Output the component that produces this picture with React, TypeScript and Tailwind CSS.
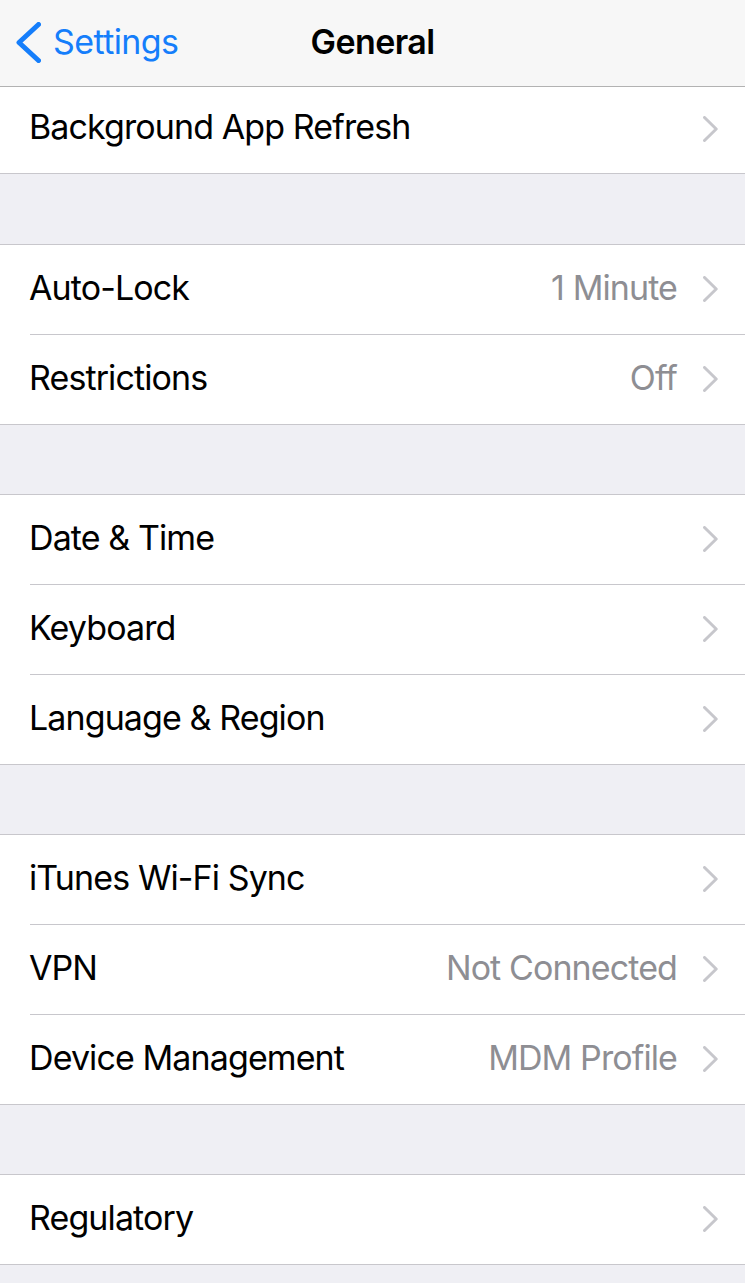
import { Fragment } from 'react';

type Row = { label: string; value?: string };

const groups: Row[][] = [
  [{ label: 'Auto-Lock', value: '1 Minute' }, { label: 'Restrictions', value: 'Off' }],
  [{ label: 'Date & Time' }, { label: 'Keyboard' }, { label: 'Language & Region' }],
  [
    { label: 'iTunes Wi-Fi Sync' },
    { label: 'VPN', value: 'Not Connected' },
    { label: 'Device Management', value: 'MDM Profile' },
  ],
  [{ label: 'Regulatory' }],
];

function Chevron() {
  return (
    <svg width="15" height="26" viewBox="0 0 15 26" className="shrink-0">
      <polyline
        points="1.5,1.5 13.2,13 1.5,24.5"
        fill="none"
        stroke="#c7c7cc"
        strokeWidth="3"
        strokeLinecap="round"
        strokeLinejoin="round"
      />
    </svg>
  );
}

function BackChevron() {
  return (
    <svg width="26" height="41" viewBox="0 0 26 41">
      <polyline
        points="23.5,2.5 4,20.5 23.5,38.5"
        fill="none"
        stroke="#157efb"
        strokeWidth="5"
        strokeLinecap="round"
        strokeLinejoin="round"
      />
    </svg>
  );
}

function Cell({ label, value, height = 'h-[89px] pb-[4px]' }: Row & { height?: string }) {
  return (
    <div className={`flex items-center pl-[29px] pr-[27px] ${height}`}>
      <span className="flex-1 text-[34px] tracking-[-0.9px] text-black">{label}</span>
      {value && <span className="text-[34px] tracking-[-0.9px] text-[#8e8e93]">{value}</span>}
      <span className="ml-[26px] flex pt-[3px]">
        <Chevron />
      </span>
    </div>
  );
}

export default function App() {
  return (
    <div className="min-h-[1283px] bg-[#efeff4] font-['Inter',sans-serif] leading-none">
      {/* Nav bar */}
      <header className="relative flex h-[87px] items-center border-b border-[#b2b2b2] bg-[#f7f7f7] pb-[2px]">
        <div className="flex items-center pl-[15px] text-[#157efb]">
          <BackChevron />
          <span className="ml-[12px] text-[34px] tracking-[-0.6px]">Settings</span>
        </div>
        <h1 className="absolute left-1/2 -translate-x-1/2 text-[34px] font-semibold tracking-[-0.6px] text-black">
          General
        </h1>
      </header>

      {/* First group, partly under the nav bar */}
      <div className="border-b border-[#c8c7cc] bg-white">
        <Cell label="Background App Refresh" height="h-[86px] pb-[6px]" />
      </div>

      {groups.map((group, gi) => (
        <Fragment key={gi}>
          <div className={gi === 0 ? 'h-[70px]' : 'h-[69px]'} />
          <div className="border-y border-[#c8c7cc] bg-white">
            {group.map((row, ri) => (
              <Fragment key={row.label}>
                {ri > 0 && <div className="ml-[30px] h-px bg-[#c8c7cc]" />}
                <Cell {...row} />
              </Fragment>
            ))}
          </div>
        </Fragment>
      ))}
    </div>
  );
}
